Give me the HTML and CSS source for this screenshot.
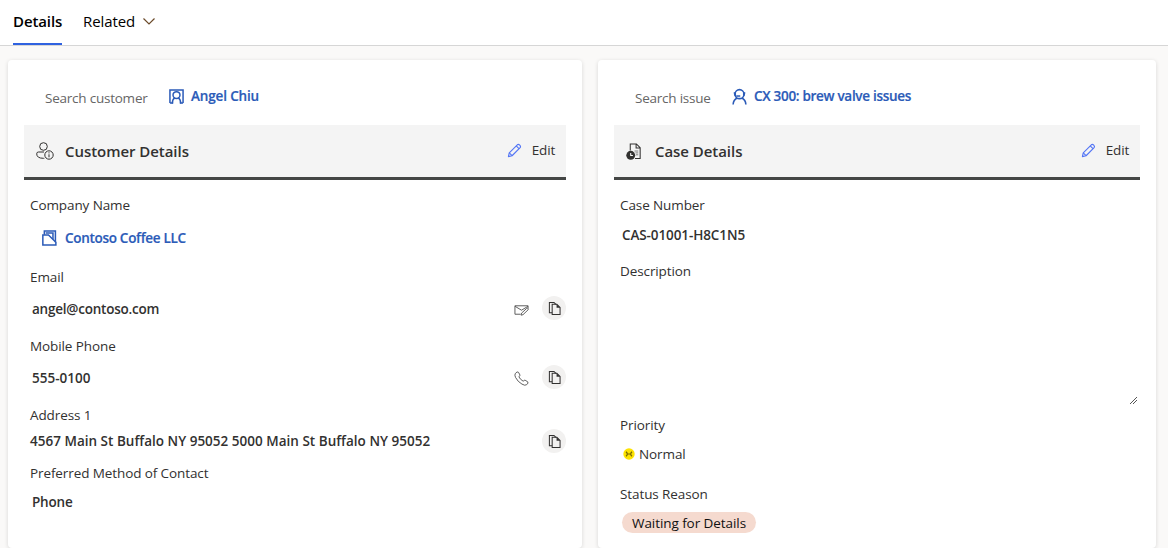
FILE: index.html
```html
<!DOCTYPE html>
<html lang="en">
<head>
<meta charset="utf-8">
<title>Case Details</title>
<link rel="stylesheet" href="styles.css">
</head>
<body>
<svg class="defs" width="0" height="0">
  <symbol id="pencil" viewBox="0 0 16 16"><g fill="none" stroke="currentColor" stroke-width="1.2" stroke-linejoin="round"><path d="M1.500 14.500l.9-4L11 1.900q1.200-1 2.600.3 1.400 1.400.4 2.700L5.400 13.600z"/><path d="M9.800 3.100l3 3M2.400 10.500l3 3"/></g></symbol>
  <symbol id="copy" viewBox="0 0 14 16"><g fill="none" stroke="currentColor" stroke-width="1.1"><path d="M4.500 12.500H1.500V1.500h5l2 2"/><path d="M4.500 3.500h5l3.500 3.500v7.500H4.500z"/></g><path d="M9.200 3.500v3.700h3.800z" fill="currentColor"/></symbol>
</svg>
<nav class="tabs">
  <a class="tab tab--active">Details</a>
  <a class="tab tab--related">Related <svg class="chevron" viewBox="0 0 12 7"><path d="M.5.5L6 6 11.500.5" fill="none" stroke="currentColor" stroke-width="1.2"/></svg></a>
</nav>
<main class="board">
  <section class="card">
    <div class="search">
      <span class="search-label search-label--customer">Search customer</span>
      <svg class="icon-contact" viewBox="0 0 16 16"><g fill="none" stroke="currentColor" stroke-width="1.600"><path d="M1 15V1h14v14M1 15h3.500M11.500 15H15"/><circle cx="8" cy="6.500" r="3.700"/><path d="M3.500 15.500q.2-4.500 2.500-6M12.500 15.500q-.2-4.500-2.500-6"/></g></svg>
      <a class="link link--angel">Angel Chiu</a>
    </div>
    <header class="section-head">
      <svg class="head-icon" viewBox="0 0 18 18"><g fill="none" stroke="currentColor"><circle cx="7.500" cy="4.500" r="3.800"/><path d="M8 10H2.500Q.7 10 .7 11.800q0 4.500 6.800 4.500h.8"/><circle cx="13" cy="13" r="4.200"/><path d="M13 12.300v3M13 10.300v1.100"/></g></svg>
      <h2 class="title title--customer">Customer Details</h2>
      <button class="edit"><svg class="pencil"><use href="#pencil"/></svg>Edit</button>
    </header>
    <div class="fields">
      <div class="label label--company">Company Name</div>
      <div class="value value--company"><svg class="icon-account" viewBox="0 0 16 17"><g fill="none" stroke="currentColor" stroke-width="1.600"><path d="M.9 5.200h6L14.800 13v3H.9z"/><path d="M2.500 5V1h11.800v12M4 3.200h7.700v6.500"/></g></svg><a class="link link--company">Contoso Coffee LLC</a></div>
      <div class="label label--email">Email</div>
      <div class="value value--email"><span class="strong strong--email">angel@contoso.com</span>
        <svg class="action" viewBox="0 0 16 14"><g fill="none" stroke="currentColor"><path d="M7 11.500H1V2.500h14v2.700M1 3l7 4.200L15 3"/><path d="M7.500 12.500l.6-2.200 5.400-5q1-.6 1.600.1.500.8-.2 1.500L9.600 12z"/></g></svg>
        <button class="copy"><svg><use href="#copy"/></svg></button></div>
      <div class="label label--mobile">Mobile Phone</div>
      <div class="value value--mobile"><span class="strong strong--mobile">555-0100</span>
        <svg class="action action--phone" viewBox="0 0 16 16"><path d="M1.300 2.800Q3.500-.2 4.800 1.400L6.300 4.200Q6.600 5.200 5.200 6.200 6.500 9 9.800 10.900 10.800 9.400 11.900 9.900L14.600 11.500Q15.800 12.700 13.500 14.600 11.800 16 8.500 14 4 11.500 1.600 6.800.5 4.200 1.300 2.800z" fill="none" stroke="currentColor"/></svg>
        <button class="copy"><svg><use href="#copy"/></svg></button></div>
      <div class="label label--address">Address 1</div>
      <div class="value value--address"><span class="strong strong--address">4567 Main St Buffalo NY 95052 5000 Main St Buffalo NY 95052</span>
        <button class="copy"><svg><use href="#copy"/></svg></button></div>
      <div class="label label--method">Preferred Method of Contact</div>
      <div class="value value--method"><span class="strong strong--method">Phone</span></div>
    </div>
  </section>
  <section class="card">
    <div class="search">
      <span class="search-label search-label--issue">Search issue</span>
      <svg class="icon-case" viewBox="0 0 16 18"><g fill="none" stroke="currentColor" stroke-width="1.700"><circle cx="8" cy="6.500" r="4.800"/><path d="M1.200 17.500q.3-5 4.300-6.800M14.800 17.500q-.3-5-4.300-6.800"/></g><path d="M1.800 4.500h2.500v4.700q-2.500-.2-2.500-4.700zM14.200 4.500h-2.500v4.700q2.500-.2 2.500-4.700z" fill="currentColor"/><path d="M4.500 8.500h4.300" stroke="currentColor" stroke-width="1.600"/></svg>
      <a class="link link--case">CX 300: brew valve issues</a>
    </div>
    <header class="section-head">
      <svg class="head-icon head-icon--case" viewBox="0 0 18 18"><g fill="none" stroke="currentColor" stroke-width="1.100"><path d="M4.500 8V1h6.500l4 4v11.500H9.500M10.700 1v4.300H15"/><path d="M9 8.500h4M10 10.500h3M10.500 12.500h2.500" stroke="#777" stroke-width="1"/></g><circle cx="5" cy="13" r="4.700" fill="currentColor"/><path d="M5 10.500v2.700h2.300" fill="none" stroke="#fff" stroke-width="1.100"/></svg>
      <h2 class="title title--case">Case Details</h2>
      <button class="edit"><svg class="pencil"><use href="#pencil"/></svg>Edit</button>
    </header>
    <div class="fields">
      <div class="label label--number">Case Number</div>
      <div class="value value--number"><span class="strong strong--number">CAS-01001-H8C1N5</span></div>
      <div class="label label--description">Description</div>
      <div class="description"><svg class="grip" viewBox="0 0 7 7" shape-rendering="crispEdges"><path d="M0 6h1v1H0zM1 5h1v1H1zM2 4h1v1H2zM3 3h1v1H3zM4 2h1v1H4zM5 1h1v1H5zM6 0h1v1H6zM3 6h1v1H3zM4 5h1v1H4zM5 4h1v1H5zM6 3h1v1H6z" fill="#555"/></svg></div>
      <div class="label label--priority">Priority</div>
      <div class="value value--priority"><svg class="icon-priority" viewBox="0 0 12 12"><circle cx="6" cy="6" r="5.700" fill="#fde300"/><path d="M3 3.700q2.600 2.300 0 4.600M9 3.700q-2.600 2.300 0 4.600M4.500 6h3" fill="none" stroke="#766600" stroke-width="1.200"/></svg><span class="normal">Normal</span></div>
      <div class="label label--status">Status Reason</div>
      <div class="badge"><span>Waiting for Details</span></div>
    </div>
  </section>
</main>
</body>
</html>
```

FILE: styles.css
```css
* { box-sizing: border-box; }
body {
  margin: 0;
  height: 548px;
  overflow: hidden;
  background: #faf9f8;
  color: #323130;
  font: 13.5px/20px "Open Sans", "Noto Sans", sans-serif;
  white-space: nowrap;
}
svg { display: block; flex: none; overflow: visible; }
.defs { position: absolute; }
button { border: 0; padding: 0; background: none; color: inherit; font: inherit; }

.tabs {
  display: flex;
  gap: 21px;
  height: 46px;
  padding-left: 13px;
  background: #fff;
  border-bottom: 1px solid #d6d6d6;
}
.tab { display: flex; align-items: center; height: 45px; padding-bottom: 3px; color: #000; font-size: 15px; }
.tab--active { width: 49px; border-bottom: 2px solid #2f62e0; padding-bottom: 1px; font-weight: 600; letter-spacing: -0.1px; }
.tab--related { letter-spacing: -0.1px; }
.chevron { width: 12px; height: 7px; margin: 1px 0 0 8px; color: #6b4a2a; }

.board { display: grid; grid-template-columns: 574px 558px; gap: 16px; padding: 14px 8px 0; }
.card {
  height: 488px;
  padding: 0 16px;
  background: #fff;
  border-radius: 4px;
  box-shadow: 0 1px 4px rgba(0, 0, 0, 0.14);
}
.search { display: flex; align-items: center; height: 65px; padding: 7px 0 0 21px; color: #2b5bb8; }
.search-label { padding-top: 4px; color: #666; letter-spacing: -0.23px; }
.search-label--customer { width: 124px; }
.search-label--issue { width: 97px; }
.icon-contact { width: 15px; height: 15px; margin-right: 7px; }
.icon-case { width: 15px; height: 17px; margin-right: 7px; }
.link { color: #2b5bb8; font-weight: 600; letter-spacing: -0.3px; -webkit-text-stroke: 0.2px; }
.link--angel { letter-spacing: -0.15px; }

.section-head {
  display: flex;
  align-items: center;
  height: 55px;
  padding: 0 11px 0 12px;
  background: #f4f4f4;
  border-bottom: 3px solid #444645;
}
.head-icon { width: 18px; height: 18px; margin-right: 11px; }
.head-icon--case { width: 17px; height: 17px; margin-right: 12px; }
.title { margin: 0; font-size: 15px; line-height: 22px; font-weight: 600; letter-spacing: -0.05px; }
.edit { display: flex; align-items: center; margin-left: auto; gap: 10px; padding-bottom: 2px; letter-spacing: -0.2px; }
.pencil { width: 15px; height: 15px; margin-top: 1px; color: #5375f5; }

.fields { display: flex; flex-direction: column; padding: 15px 0 0 6px; }
.label { height: 20px; letter-spacing: -0.1px; }
.value { display: flex; align-items: center; height: 24px; padding-left: 2px; }
.strong { font-weight: 600; margin-right: auto; }
.strong--email { letter-spacing: -0.22px; }
.strong--number { letter-spacing: -0.1px; }
.strong--method { letter-spacing: -0.2px; }
.strong--address { letter-spacing: 0.01px; }
.value--company { margin: 11px 0 17px; padding-left: 12px; }
.icon-account { width: 15px; height: 16px; margin-right: 8px; color: #2b5bb8; }
.value--email { margin: 10px 0 15px; }
.value--mobile { margin: 10px 0 15px; }
.value--address { margin: 4px 0 10px; padding-left: 0; }
.value--method { margin-top: 7px; }
.action { width: 15px; height: 14px; margin: 2px 13px 0 0; color: #555; }
.action--phone { height: 15px; margin-top: 0; }
.copy { display: flex; align-items: center; justify-content: center; width: 24px; height: 24px; margin-top: -2px; border-radius: 50%; background: #f2f1f0; }
.value--address .copy { margin-top: 0; }
.copy svg { width: 13px; height: 15px; }

.value--number { margin: 8px 0 14px; }
.description { display: flex; justify-content: flex-end; align-items: flex-end; height: 134px; padding: 0 3px 11px 0; }
.grip { width: 7px; height: 7px; }
.value--priority { margin: 7px 0 18px; }
.icon-priority { width: 12px; height: 12px; margin: 0 4px 0 1px; }
.normal { letter-spacing: -0.1px; }
.badge {
  display: flex;
  align-items: center;
  justify-content: center;
  width: 134px;
  height: 21px;
  margin: 8px 0 0 2px;
  border-radius: 10.5px;
  background: #f5dacf;
  color: #111;
  letter-spacing: -0.07px;
}
```
